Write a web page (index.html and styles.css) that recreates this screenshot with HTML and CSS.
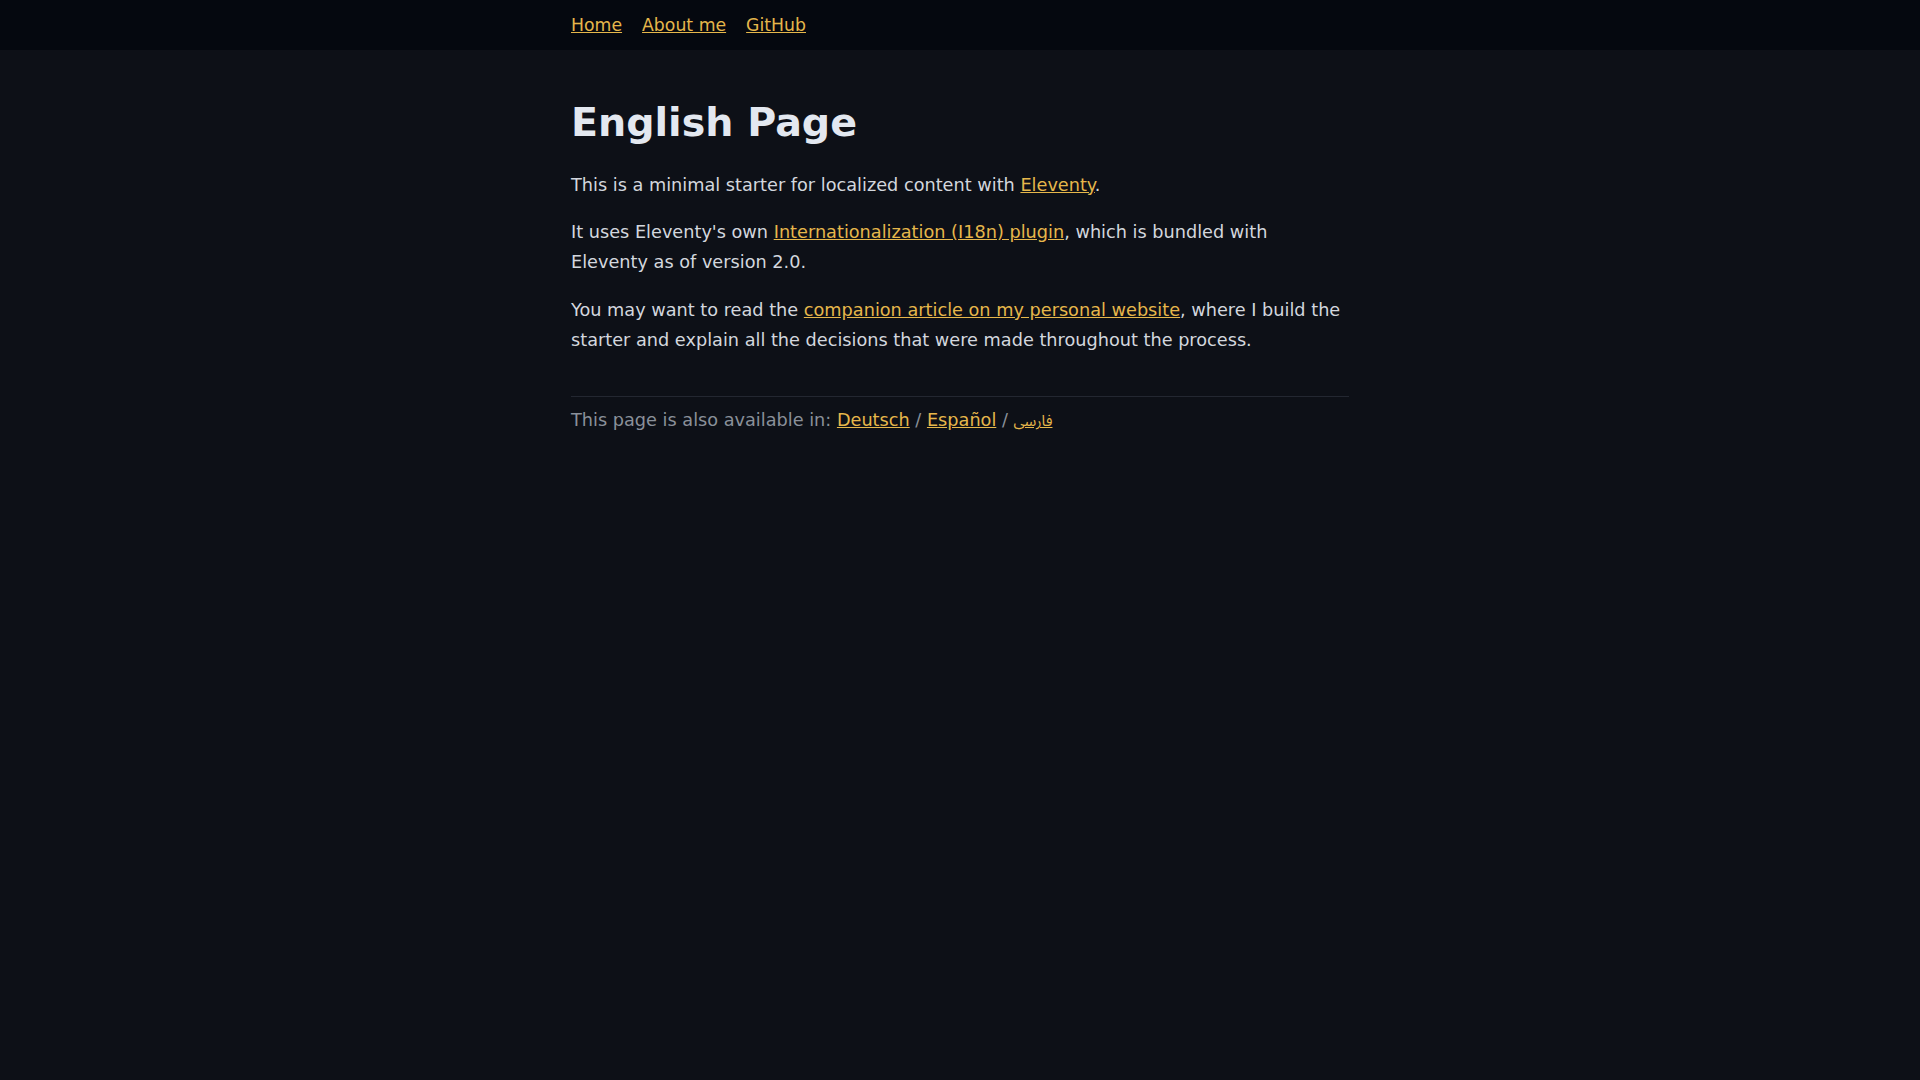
FILE: index.html
```html
<!DOCTYPE html>
<html lang="en">
<head>
<meta charset="utf-8">
<title>English Page</title>
<link rel="stylesheet" href="styles.css">
</head>
<body>
<header class="site-header">
  <nav class="nav wrap">
    <a href="#">Home</a>
    <a href="#">About me</a>
    <a href="#">GitHub</a>
  </nav>
</header>
<main class="wrap content">
  <h1>English Page</h1>
  <p>This is a minimal starter for localized content with <a href="#">Eleventy</a>.</p>
  <p>It uses Eleventy's own <a href="#">Internationalization (I18n) plugin</a>, which is bundled with Eleventy as of version 2.0.</p>
  <p>You may want to read the <a href="#">companion article on my personal website</a>, where I build the starter and explain all the decisions that were made throughout the process.</p>
  <footer class="langs">
    This page is also available in: <a href="#" lang="de">Deutsch</a> / <a href="#" lang="es">Español</a> / <a href="#" lang="fa" dir="rtl" class="fa">فارسی</a>
  </footer>
</main>
</body>
</html>
```
FILE: styles.css
```css
html, body {
  margin: 0;
  padding: 0;
}
body {
  background: #0d1017;
  color: #d3d7de;
  font-family: "DejaVu Sans", sans-serif;
  font-size: 17.7px;
  line-height: 1.69;
}
a {
  color: #e6b74b;
  text-decoration: underline;
}
.wrap {
  width: 778px;
  margin: 0 auto;
}
.site-header {
  background: #05080f;
  height: 50px;
}
.nav {
  display: flex;
  gap: 20px;
  align-items: center;
  height: 50px;
  padding-top: 2px;
  box-sizing: border-box;
  font-size: 17.3px;
}
.content {
  padding-top: 1px;
}
h1 {
  font-size: 39.6px;
  line-height: 1.2;
  color: #e3e8f0;
  margin: 48px 0 24px;
  font-weight: bold;
}
p {
  margin: 0 0 17.7px;
}
.langs {
  margin-top: 41px;
  border-top: 1px solid #232731;
  padding-top: 9px;
  color: #8a909a;
}
.fa {
  font-family: "Noto Sans Arabic", "Noto Naskh Arabic", "Noto Sans", sans-serif;
  font-size: 15px;
}
```
